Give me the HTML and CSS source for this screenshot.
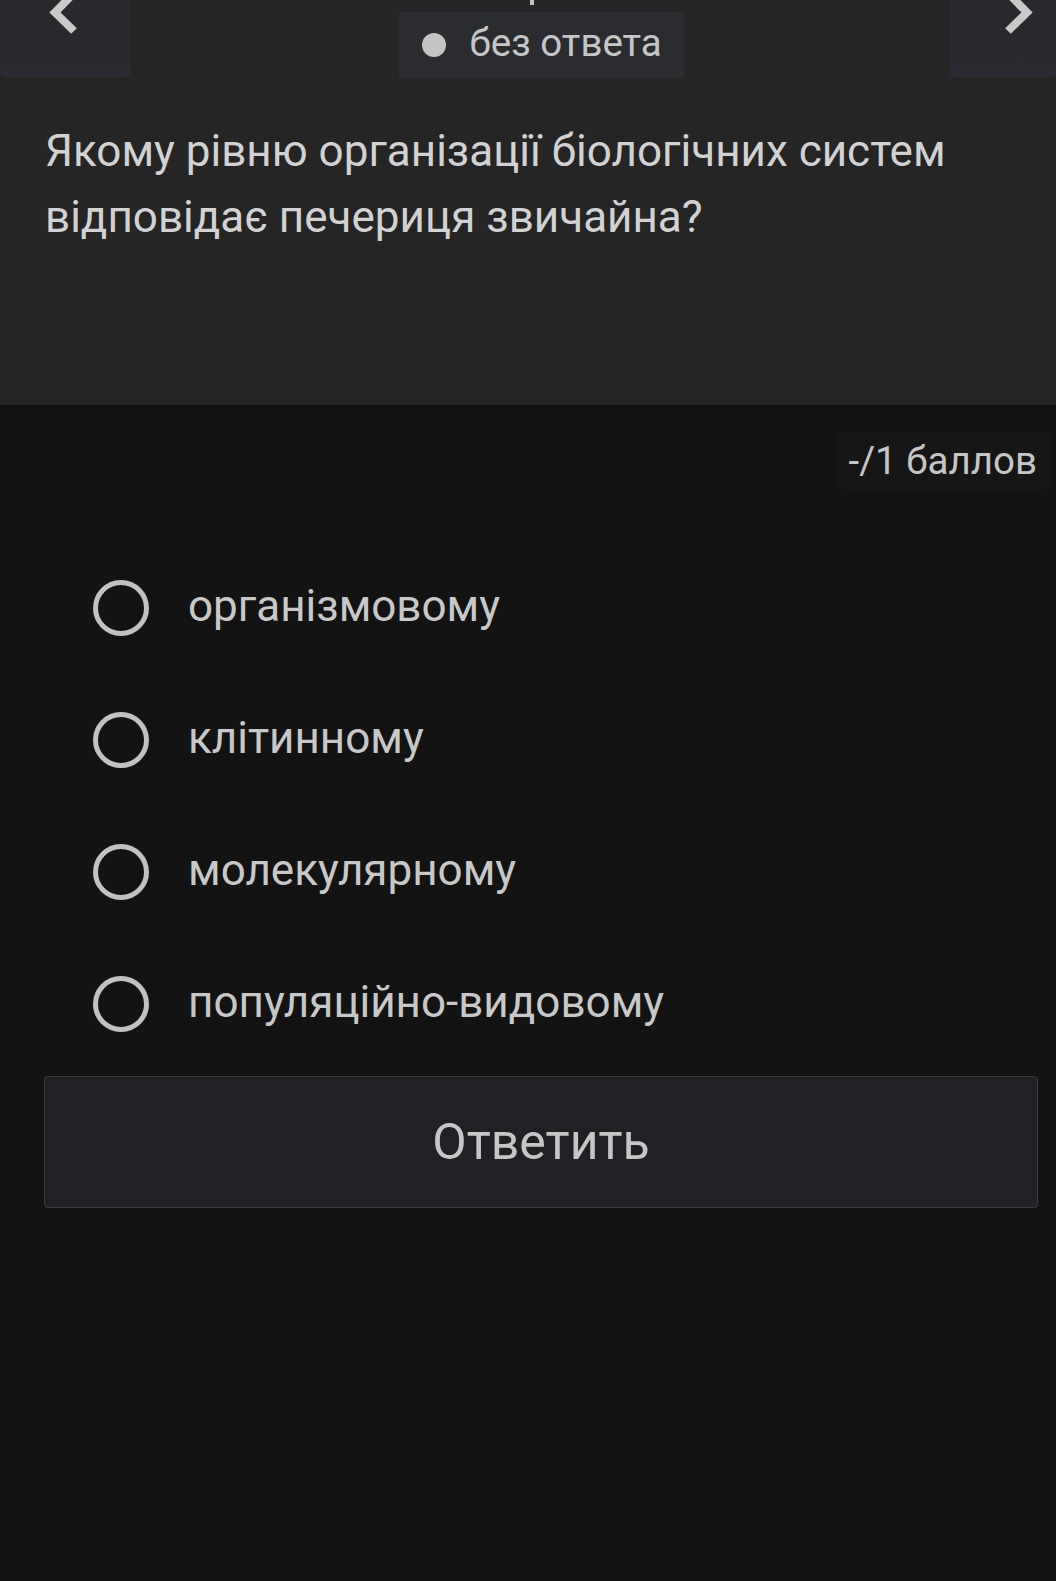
FILE: index.html
```html
<!DOCTYPE html>
<html lang="uk">
<head>
<meta charset="utf-8">
<link rel="stylesheet" href="styles.css">
</head>
<body>
<div class="page">
  <section class="top">
    <div class="nav-row">
      <button class="nav-btn nav-prev" aria-label="prev">
        <svg width="132" height="78" viewBox="0 0 132 78"><path d="M71 -4 L55 12.5 L74 31" fill="none" stroke="#c9c9c9" stroke-width="8"/></svg>
      </button>
      <div class="status-wrap">
        <div class="cut-mark"></div>
        <div class="status"><span class="dot"></span><span class="status-text">без ответа</span></div>
      </div>
      <button class="nav-btn nav-next" aria-label="next">
        <svg width="106" height="78" viewBox="0 0 106 78"><path d="M61 -4 L77 12.5 L58 31" fill="none" stroke="#c9c9c9" stroke-width="8"/></svg>
      </button>
    </div>
    <p class="question">Якому рівню організації біологічних систем відповідає печериця звичайна?</p>
  </section>
  <section class="bottom">
    <div class="score-row"><span class="score">-/1 баллов</span></div>
    <ul class="options">
      <li class="option"><span class="radio"></span><span class="label">організмовому</span></li>
      <li class="option"><span class="radio"></span><span class="label">клітинному</span></li>
      <li class="option"><span class="radio"></span><span class="label">молекулярному</span></li>
      <li class="option"><span class="radio"></span><span class="label">популяційно-видовому</span></li>
    </ul>
    <button class="answer">Ответить</button>
  </section>
</div>
</body>
</html>
```
FILE: styles.css
```css
html, body {
  margin: 0;
  padding: 0;
  background: #131313;
  font-family: Roboto, "Noto Sans", sans-serif;
}
.page {
  width: 1056px;
  min-height: 1581px;
  display: flex;
  flex-direction: column;
}
.top {
  background: #252525;
  height: 405px;
  box-sizing: border-box;
}
.nav-row {
  display: grid;
  grid-template-columns: 132px 1fr 106px;
  align-items: start;
  height: 78px;
}
.nav-btn {
  box-sizing: border-box;
  height: 77px;
  border: none;
  padding: 0;
  background: linear-gradient(#27292c 0%, #27292c 70%, #2a2b33 100%);
  border-radius: 0 0 5px 5px;
  display: block;
  cursor: pointer;
}
.nav-btn svg {
  display: block;
}
.nav-prev {
  width: 131px;
}
.nav-next {
  width: 106px;
}
.status-wrap {
  justify-self: center;
  display: flex;
  flex-direction: column;
  align-items: flex-start;
}
.cut-mark {
  width: 4px;
  height: 5px;
  background: #c4c4c4;
  margin-left: 131px;
  margin-bottom: 7px;
}
.status {
  display: flex;
  align-items: center;
  background: #2b2c30;
  height: 66px;
  width: 285px;
  box-sizing: border-box;
  padding-left: 23px;
  border-radius: 3px;
}
.dot {
  width: 24px;
  height: 24px;
  border-radius: 50%;
  background: #c4c4c4;
  margin-right: 24px;
}
.status-text {
  color: #c6c6c6;
  font-size: 38.5px;
  line-height: 1;
  margin-top: -4px;
}
.question {
  margin: 0;
  padding: 40px 45px 0;
  color: #d2d2d2;
  font-size: 44px;
  line-height: 66px;
}
.bottom {
  flex: 1;
  display: flex;
  flex-direction: column;
  padding: 27px 4px 0 44px;
}
.score-row {
  display: flex;
  justify-content: flex-end;
}
.score {
  color: #c6c6c6;
  font-size: 38.5px;
  line-height: 58px;
  background: #161616;
  border-radius: 8px;
  padding: 0 15px 0 13px;
}
.options {
  list-style: none;
  margin: 90px 15px 0 0;
  padding: 0;
  display: flex;
  flex-direction: column;
  gap: 76px;
}
.option {
  display: flex;
  align-items: center;
  height: 56px;
  padding-left: 49px;
}
.radio {
  width: 46px;
  height: 46px;
  border: 5px solid #c2c2c2;
  border-radius: 50%;
  flex: 0 0 auto;
}
.label {
  color: #c8c8c8;
  font-size: 44px;
  margin-left: 39px;
  line-height: 1;
  margin-top: -4px;
}
.answer {
  margin-top: 44px;
  height: 132px;
  width: 994px;
  background: #202125;
  border: 1px solid #3b3c40;
  border-radius: 4px;
  color: #c6c6c6;
  font-family: Roboto, "Noto Sans", sans-serif;
  font-size: 50px;
  padding: 0;
}
```
